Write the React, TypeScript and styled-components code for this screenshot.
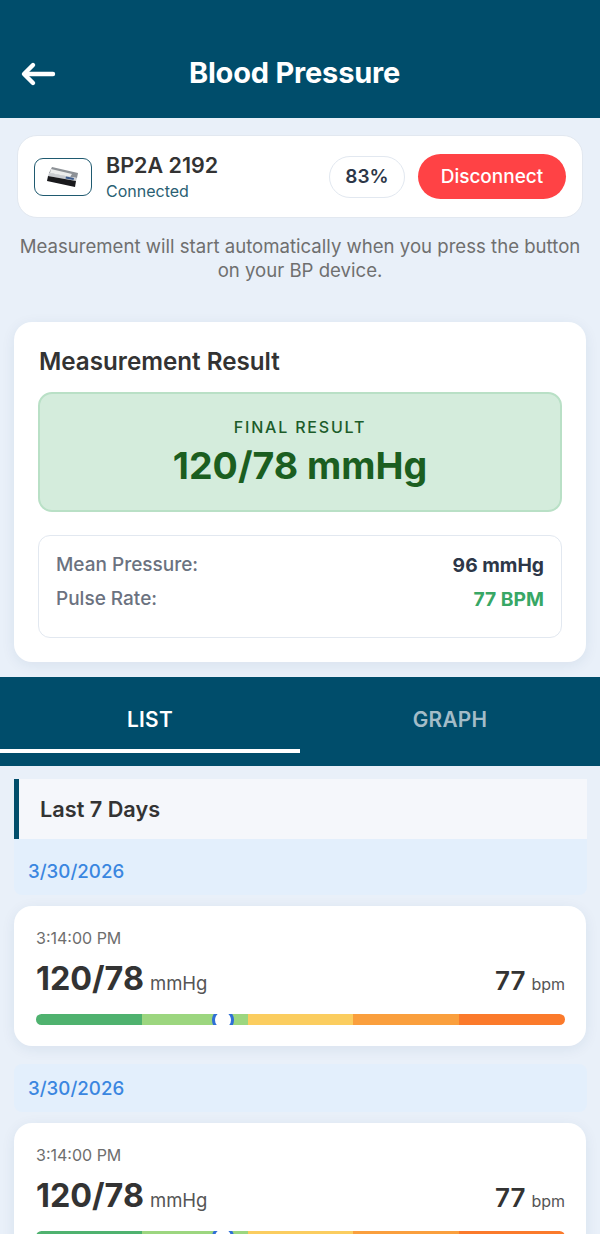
import * as React from 'react'
import styled, { createGlobalStyle } from 'styled-components';

const Theme = {
  colors: {
    navy: `#004d6b`,
    bg: `#e9f0f9`,
    dark: `#333333`,
    slate: `#2d3748`,
    grey: `#6b7280`,
    blue: `#3a86e0`,
  },
  font: `Inter, "Liberation Sans", sans-serif`,
};

const GlobalStyle = createGlobalStyle`
  html, body { margin: 0; padding: 0; height: 100%; overflow: hidden; }
  body { background: ${Theme.colors.bg}; font-family: ${Theme.font}; }
  * { box-sizing: border-box; }
`;

const Page = styled.div`
  width: 600px;
  height: 1234px;
  overflow: hidden;
  background: ${Theme.colors.bg};
`;

const Header = styled.header`
  height: 118px;
  padding: 30px 20px 0 20px;
  background: ${Theme.colors.navy};
  display: flex;
  align-items: center;
`;

const BackButton = styled.div`
  width: 36px;
  height: 36px;
  display: flex;
  align-items: center;
`;

const Title = styled.h1`
  margin: 0 0 2px 0;
  flex: 1;
  text-align: center;
  padding-right: 47px;
  color: #fff;
  font-size: 29px;
  line-height: 34px;
  font-weight: 700;
  letter-spacing: -0.2px;
`;

const DeviceSection = styled.section`
  padding: 17px 17px 0 17px;
`;

const DeviceCard = styled.div`
  height: 83px;
  padding: 0 16px 0 16px;
  background: #fff;
  border: 1px solid #e2e8f0;
  border-radius: 20px;
  display: flex;
  align-items: center;
`;

const DeviceThumb = styled.div`
  width: 58px;
  height: 38px;
  border: 1.5px solid #1f5a70;
  border-radius: 9px;
  display: flex;
  align-items: center;
  justify-content: center;
  margin-right: 14px;
`;

const DeviceText = styled.div`
  flex: 1;
  display: flex;
  flex-direction: column;
  gap: 2px;
`;

const DeviceName = styled.div`
  font-size: 21.5px;
  line-height: 27px;
  font-weight: 600;
  color: ${Theme.colors.dark};
`;

const DeviceStatus = styled.div`
  font-size: 16px;
  line-height: 20px;
  color: #2b5f73;
`;

const Battery = styled.div`
  width: 76px;
  height: 42px;
  border: 1px solid #e2e8f0;
  border-radius: 21px;
  display: flex;
  align-items: center;
  justify-content: center;
  font-size: 19px;
  font-weight: 600;
  color: ${Theme.colors.slate};
  margin-right: 13px;
`;

const DisconnectButton = styled.div`
  width: 148px;
  height: 45px;
  border-radius: 23px;
  background: #ff4245;
  color: #fff;
  display: flex;
  align-items: center;
  justify-content: center;
  font-size: 19px;
  font-weight: 500;
`;

const Hint = styled.p`
  margin: 17px 0 0 0;
  text-align: center;
  font-size: 18.6px;
  line-height: 23.5px;
  color: #6f6f6f;
`;

const ResultCard = styled.section`
  margin: 40px 14px 0 14px;
  height: 340px;
  padding: 25px 24px 0 24px;
  background: #fff;
  border-radius: 18px;
  box-shadow: 0 3px 14px rgba(30, 60, 100, 0.08);
`;

const CardTitle = styled.h2`
  margin: 0;
  padding-left: 1px;
  font-size: 24.2px;
  line-height: 30px;
  font-weight: 600;
  color: ${Theme.colors.dark};
`;

const FinalBox = styled.div`
  margin-top: 15px;
  height: 120px;
  background: #d4ecdc;
  border: 2px solid #b9e0c6;
  border-radius: 14px;
  display: flex;
  flex-direction: column;
  align-items: center;
  padding-top: 23px;
`;

const FinalLabel = styled.div`
  font-size: 16px;
  line-height: 20px;
  font-weight: 500;
  letter-spacing: 1.8px;
  color: #1c5c2a;
`;

const FinalValue = styled.div`
  margin-top: 6px;
  font-size: 37.5px;
  line-height: 46px;
  font-weight: 700;
  color: #1b5e20;
`;

const StatsBox = styled.div`
  margin-top: 23px;
  height: 103px;
  padding: 16px 17px 0 17px;
  border: 1px solid #e2e8f0;
  border-radius: 12px;
  display: flex;
  flex-direction: column;
  gap: 9px;
`;

const StatRow = styled.div`
  display: flex;
  justify-content: space-between;
  align-items: center;
  height: 25px;
`;

const StatLabel = styled.span`
  font-size: 19px;
  font-weight: 500;
  color: ${Theme.colors.grey};
`;

const StatValue = styled.span<{ $green?: boolean }>`
  font-size: 19.3px;
  font-weight: 700;
  color: ${(p) => (p.$green ? '#38a765' : Theme.colors.slate)};
`;

const Tabs = styled.nav`
  margin-top: 15px;
  height: 89px;
  background: ${Theme.colors.navy};
  display: flex;
`;

const Tab = styled.div<{ $active?: boolean }>`
  flex: 1;
  height: 76px;
  display: flex;
  align-items: center;
  justify-content: center;
  padding-top: 13px;
  font-size: 20.8px;
  font-weight: 600;
  letter-spacing: 0.3px;
  color: ${(p) => (p.$active ? '#fff' : '#a3bcc8')};
  border-bottom: 4px solid ${(p) => (p.$active ? '#fff' : 'transparent')};
`;

const ListSection = styled.section`
  padding: 13px 13px 0 14px;
`;

const SectionHeader = styled.div`
  height: 60px;
  padding-left: 21px;
  background: #f5f7fb;
  border-left: 5px solid ${Theme.colors.navy};
  display: flex;
  align-items: center;
  font-size: 21.7px;
  font-weight: 600;
  color: ${Theme.colors.dark};
`;

const DateBand = styled.div<{ $first?: boolean }>`
  height: ${(p) => (p.$first ? 56 : 48)}px;
  padding: ${(p) => (p.$first ? 9 : 0)}px 0 0 14px;
  background: #e3effc;
  border-radius: ${(p) => (p.$first ? '0 0 8px 8px' : '8px')};
  display: flex;
  align-items: center;
  font-size: 18.7px;
  font-weight: 500;
  color: ${Theme.colors.blue};
`;

const ReadingGroup = styled.div`
  & + & { margin-top: 18px; }
`;

const ReadingCard = styled.div`
  margin-top: 11px;
  margin-right: 1px;
  height: 140px;
  padding: 23px 21px 0 22px;
  background: #fff;
  border-radius: 18px;
  box-shadow: 0 3px 14px rgba(30, 60, 100, 0.08);
`;

const ReadingTime = styled.div`
  font-size: 16px;
  line-height: 19px;
  color: #6e6e6e;
`;

const ReadingRow = styled.div`
  margin-top: 9px;
  display: flex;
  justify-content: space-between;
  align-items: baseline;
  height: 44px;
`;

const Value = styled.span`
  font-size: 32.3px;
  line-height: 44px;
  font-weight: 700;
  color: ${Theme.colors.dark};
`;

const Unit = styled.span`
  margin-left: 6px;
  font-size: 18.5px;
  color: #555;
`;

const PulseValue = styled(Value)`
  font-size: 26px;
  font-weight: 600;
`;

const PulseUnit = styled(Unit)`
  font-size: 16px;
`;

const Bar = styled.div`
  position: relative;
  margin-top: 13px;
  height: 11px;
  border-radius: 6px;
  overflow: hidden;
  display: flex;
`;

const Segment = styled.div<{ $color: string }>`
  flex: 1;
  background: ${(p) => p.$color};
`;

const Marker = styled.div`
  position: absolute;
  top: -5px;
  width: 22px;
  height: 22px;
  border-radius: 50%;
  background: #fff;
  border: 3px solid #2f6fd6;
`;

const segments = ['#4fb26f', '#9cd67f', '#fbcd5f', '#fa9f3d', '#fb7a2b'];

const BackArrow = () => (
  <svg width="36" height="28" viewBox="0 0 36 28" fill="none" stroke="#fff" strokeWidth="4.4" strokeLinecap="round" strokeLinejoin="round">
    <path d="M33 14H5" />
    <path d="M13 5L4 14l9 9" />
  </svg>
);

// small drawing of the BP2A cuff unit
const DeviceIcon = () => (
  <svg width="34" height="22" viewBox="0 0 34 22">
    <path d="M6 1 L32 7 L31 12 L3 7 Z" fill="#8d9196" />
    <path d="M5 3 L26 8 L24 11 L4 7 Z" fill="#eceded" />
    <path d="M3 7 L31 12 L30 15 L2 10 Z" fill="#c9ccd0" />
    <path d="M20 10.5 L28 12 L27.5 14 L19.5 12.5 Z" fill="#3b5a8c" />
    <path d="M2 10 L30 15 L29 21 L1 15 Z" fill="#19191c" />
  </svg>
);

const Reading = (props: { first?: boolean }) => (
  <ReadingGroup>
    <DateBand $first={props.first}>3/30/2026</DateBand>
    <ReadingCard>
      <ReadingTime>3:14:00 PM</ReadingTime>
      <ReadingRow>
        <div>
          <Value>120/78</Value>
          <Unit>mmHg</Unit>
        </div>
        <div>
          <PulseValue>77</PulseValue>
          <PulseUnit>bpm</PulseUnit>
        </div>
      </ReadingRow>
      <Bar>
        {segments.map((c) => <Segment key={c} $color={c} />)}
        <Marker style={{ left: `${(176 / 529) * 100}%` }} />
      </Bar>
    </ReadingCard>
  </ReadingGroup>
);

const App = () => (
  <Page>
    <GlobalStyle />
    <Header>
      <BackButton><BackArrow /></BackButton>
      <Title>Blood Pressure</Title>
    </Header>
    <DeviceSection>
      <DeviceCard>
        <DeviceThumb><DeviceIcon /></DeviceThumb>
        <DeviceText>
          <DeviceName>BP2A 2192</DeviceName>
          <DeviceStatus>Connected</DeviceStatus>
        </DeviceText>
        <Battery>83%</Battery>
        <DisconnectButton>Disconnect</DisconnectButton>
      </DeviceCard>
      <Hint>Measurement will start automatically when you press the button on your BP device.</Hint>
    </DeviceSection>
    <ResultCard>
      <CardTitle>Measurement Result</CardTitle>
      <FinalBox>
        <FinalLabel>FINAL RESULT</FinalLabel>
        <FinalValue>120/78 mmHg</FinalValue>
      </FinalBox>
      <StatsBox>
        <StatRow><StatLabel>Mean Pressure:</StatLabel><StatValue>96 mmHg</StatValue></StatRow>
        <StatRow><StatLabel>Pulse Rate:</StatLabel><StatValue $green>77 BPM</StatValue></StatRow>
      </StatsBox>
    </ResultCard>
    <Tabs>
      <Tab $active>LIST</Tab>
      <Tab>GRAPH</Tab>
    </Tabs>
    <ListSection>
      <SectionHeader>Last 7 Days</SectionHeader>
      <Reading first />
      <Reading />
    </ListSection>
  </Page>
);

export default App;
